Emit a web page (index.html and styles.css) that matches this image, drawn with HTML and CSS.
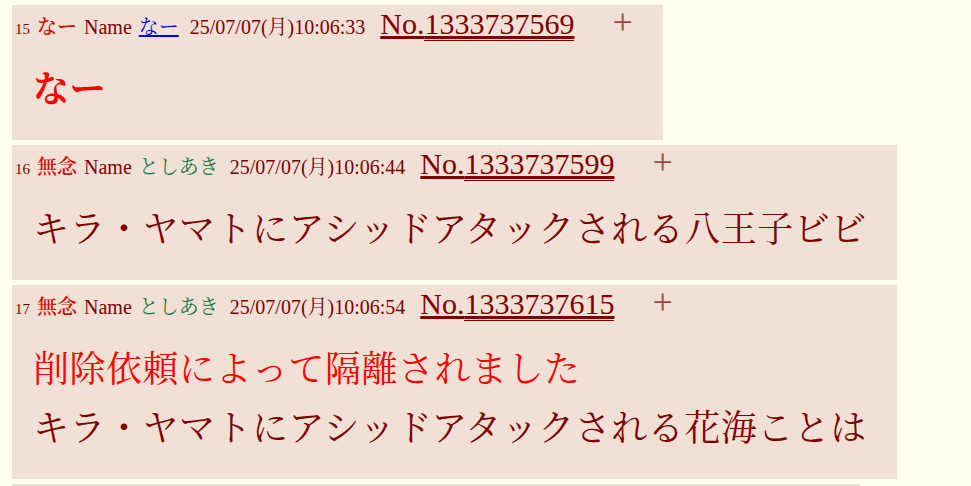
FILE: index.html
```html
<!DOCTYPE html>
<html lang="ja">
<head>
  <meta charset="UTF-8">
  <title>スレッド</title>
  <link rel="stylesheet" href="styles.css">
</head>
<body>
  <div class="thread">
    <div class="post post-top"></div>

    <div class="post">
      <div class="post-head">
        <span class="rsc">15</span>
        <span class="sub">なー</span>
        Name <a class="mail" href="#">なー</a>
        <span class="date">25/07/07(月)10:06:33</span>
        <span class="cno"><a href="#">No.</a><span class="num">1333737569</span></span>
        <span class="del">+</span>
      </div>
      <blockquote class="post-body"><span class="red bold">なー</span></blockquote>
    </div>

    <div class="post">
      <div class="post-head">
        <span class="rsc">16</span>
        <span class="sub">無念</span>
        Name <span class="name">としあき</span>
        <span class="date">25/07/07(月)10:06:44</span>
        <span class="cno"><a href="#">No.</a><span class="num">1333737599</span></span>
        <span class="del">+</span>
      </div>
      <blockquote class="post-body">キラ・ヤマトにアシッドアタックされる八王子ビビ</blockquote>
    </div>

    <div class="post">
      <div class="post-head">
        <span class="rsc">17</span>
        <span class="sub">無念</span>
        Name <span class="name">としあき</span>
        <span class="date">25/07/07(月)10:06:54</span>
        <span class="cno"><a href="#">No.</a><span class="num">1333737615</span></span>
        <span class="del">+</span>
      </div>
      <blockquote class="post-body"><span class="red">削除依頼によって隔離されました</span><br>キラ・ヤマトにアシッドアタックされる花海ことは</blockquote>
    </div>

    <div class="post post-next"></div>
  </div>
</body>
</html>
```

FILE: styles.css
```css
body {
  background-color: #ffffee;
  color: #800000;
  font-family: "Liberation Serif", "Noto Serif CJK JP", "Noto Sans CJK JP", serif;
  margin: 0;
  padding: 0 12px;
}
.thread {
  margin-top: -4px;
}
.post {
  display: table;
  background: #f0e0d6;
  margin-bottom: 5px;
  padding: 0 30px 0 3px;
}
.post-top {
  width: 790px;
  height: 4px;
}
.post-next {
  width: 815px;
  height: 10px;
}
.post-head {
  height: 44px;
  line-height: 44px;
  font-size: 20px;
  word-spacing: 2px;
  white-space: nowrap;
}
.rsc {
  font-size: 15px;
}
.sub {
  color: #cc1105;
  font-weight: 600;
}
.name {
  color: #117743;
}
.mail {
  color: #0000ff;
}
.date {
  margin-left: 4px;
}
.cno {
  font-size: 30px;
  line-height: 20px;
  margin-left: 8px;
}
.cno a {
  color: #800000;
}
.num {
  text-decoration: underline;
  border-bottom: 1px solid #800000;
}
.del {
  color: #a04848;
  font-size: 36px;
  line-height: 20px;
  margin-left: 31px;
}
.post-body {
  margin: 12px 0 20px 18px;
  font-size: 36px;
  letter-spacing: 0.5px;
  line-height: 59px;
  white-space: nowrap;
}
.red {
  color: #ff0000;
}
.bold {
  font-weight: bold;
}
```
